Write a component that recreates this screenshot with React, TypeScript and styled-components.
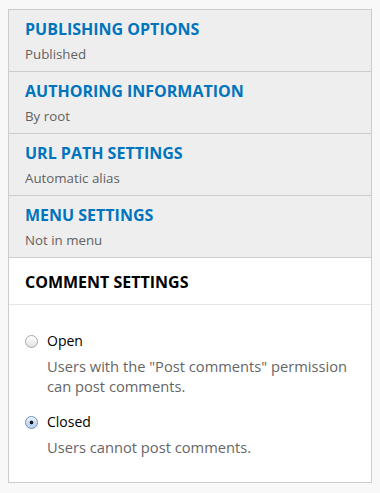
import React from 'react';
import styled, { createGlobalStyle } from 'styled-components';

const GlobalStyle = createGlobalStyle`
  html, body {
    margin: 0;
    padding: 0;
    background: #f8f8f8;
  }
  body {
    font-family: "Open Sans", "Liberation Sans", sans-serif;
    -webkit-font-smoothing: antialiased;
  }
`;

const Page = styled.div`
  padding: 9px 8px 9px 8px;
`;

const Panel = styled.div`
  width: 362px;
  border: 1px solid #cccccc;
  background: #ffffff;
`;

const Section = styled.div<{ $open?: boolean }>`
  background: ${(p) => (p.$open ? '#ffffff' : '#eeeeee')};
  border-bottom: 1px solid ${(p) => (p.$open ? '#e6e6e6' : '#cccccc')};
  padding: ${(p) => (p.$open ? '14px 16px 12px' : '9px 16px 8px')};
`;

const Title = styled.div<{ $open?: boolean }>`
  font-size: 16px;
  line-height: 20px;
  font-weight: 700;
  text-transform: uppercase;
  color: ${(p) => (p.$open ? '#000000' : '#0074bd')};
`;

const Summary = styled.div`
  margin-top: 6px;
  font-size: 13.3px;
  line-height: 18px;
  color: #626262;
`;

const Body = styled.div`
  padding: 26px 16px 25px;
  display: flex;
  flex-direction: column;
  gap: 16px;
`;

const Option = styled.div`
  display: grid;
  grid-template-columns: 22px 1fr;
  align-items: center;
`;

const Radio = styled.span<{ $checked?: boolean }>`
  width: 13px;
  height: 13px;
  border-radius: 50%;
  box-sizing: border-box;
  border: 1px solid ${(p) => (p.$checked ? '#6f8fb8' : '#a8a8a8')};
  background: ${(p) =>
    p.$checked
      ? 'radial-gradient(circle, #1a1a1a 0 1.6px, transparent 2.2px), linear-gradient(#e3edf9, #b5cced)'
      : 'linear-gradient(#ffffff, #e2e2e2)'};
  box-shadow: inset 0 1px 1px rgba(255, 255, 255, 0.8);
`;

const Label = styled.span`
  font-size: 14px;
  line-height: 20px;
  color: #000000;
`;

const Description = styled.div`
  grid-column: 2;
  margin-top: 5px;
  font-size: 14.7px;
  line-height: 20px;
  color: #666666;
`;

const sections = [
  { title: 'Publishing options', summary: 'Published' },
  { title: 'Authoring information', summary: 'By root' },
  { title: 'URL path settings', summary: 'Automatic alias' },
  { title: 'Menu settings', summary: 'Not in menu' },
];

const options = [
  {
    label: 'Open',
    description: 'Users with the "Post comments" permission can post comments.',
    checked: false,
  },
  { label: 'Closed', description: 'Users cannot post comments.', checked: true },
];

export default function App() {
  return (
    <Page>
      <GlobalStyle />
      <Panel>
        {sections.map((s) => (
          <Section key={s.title}>
            <Title>{s.title}</Title>
            <Summary>{s.summary}</Summary>
          </Section>
        ))}
        <Section $open>
          <Title $open>Comment settings</Title>
        </Section>
        <Body>
          {options.map((o) => (
            <Option key={o.label}>
              <Radio $checked={o.checked} />
              <Label>{o.label}</Label>
              <Description>{o.description}</Description>
            </Option>
          ))}
        </Body>
      </Panel>
    </Page>
  );
}
